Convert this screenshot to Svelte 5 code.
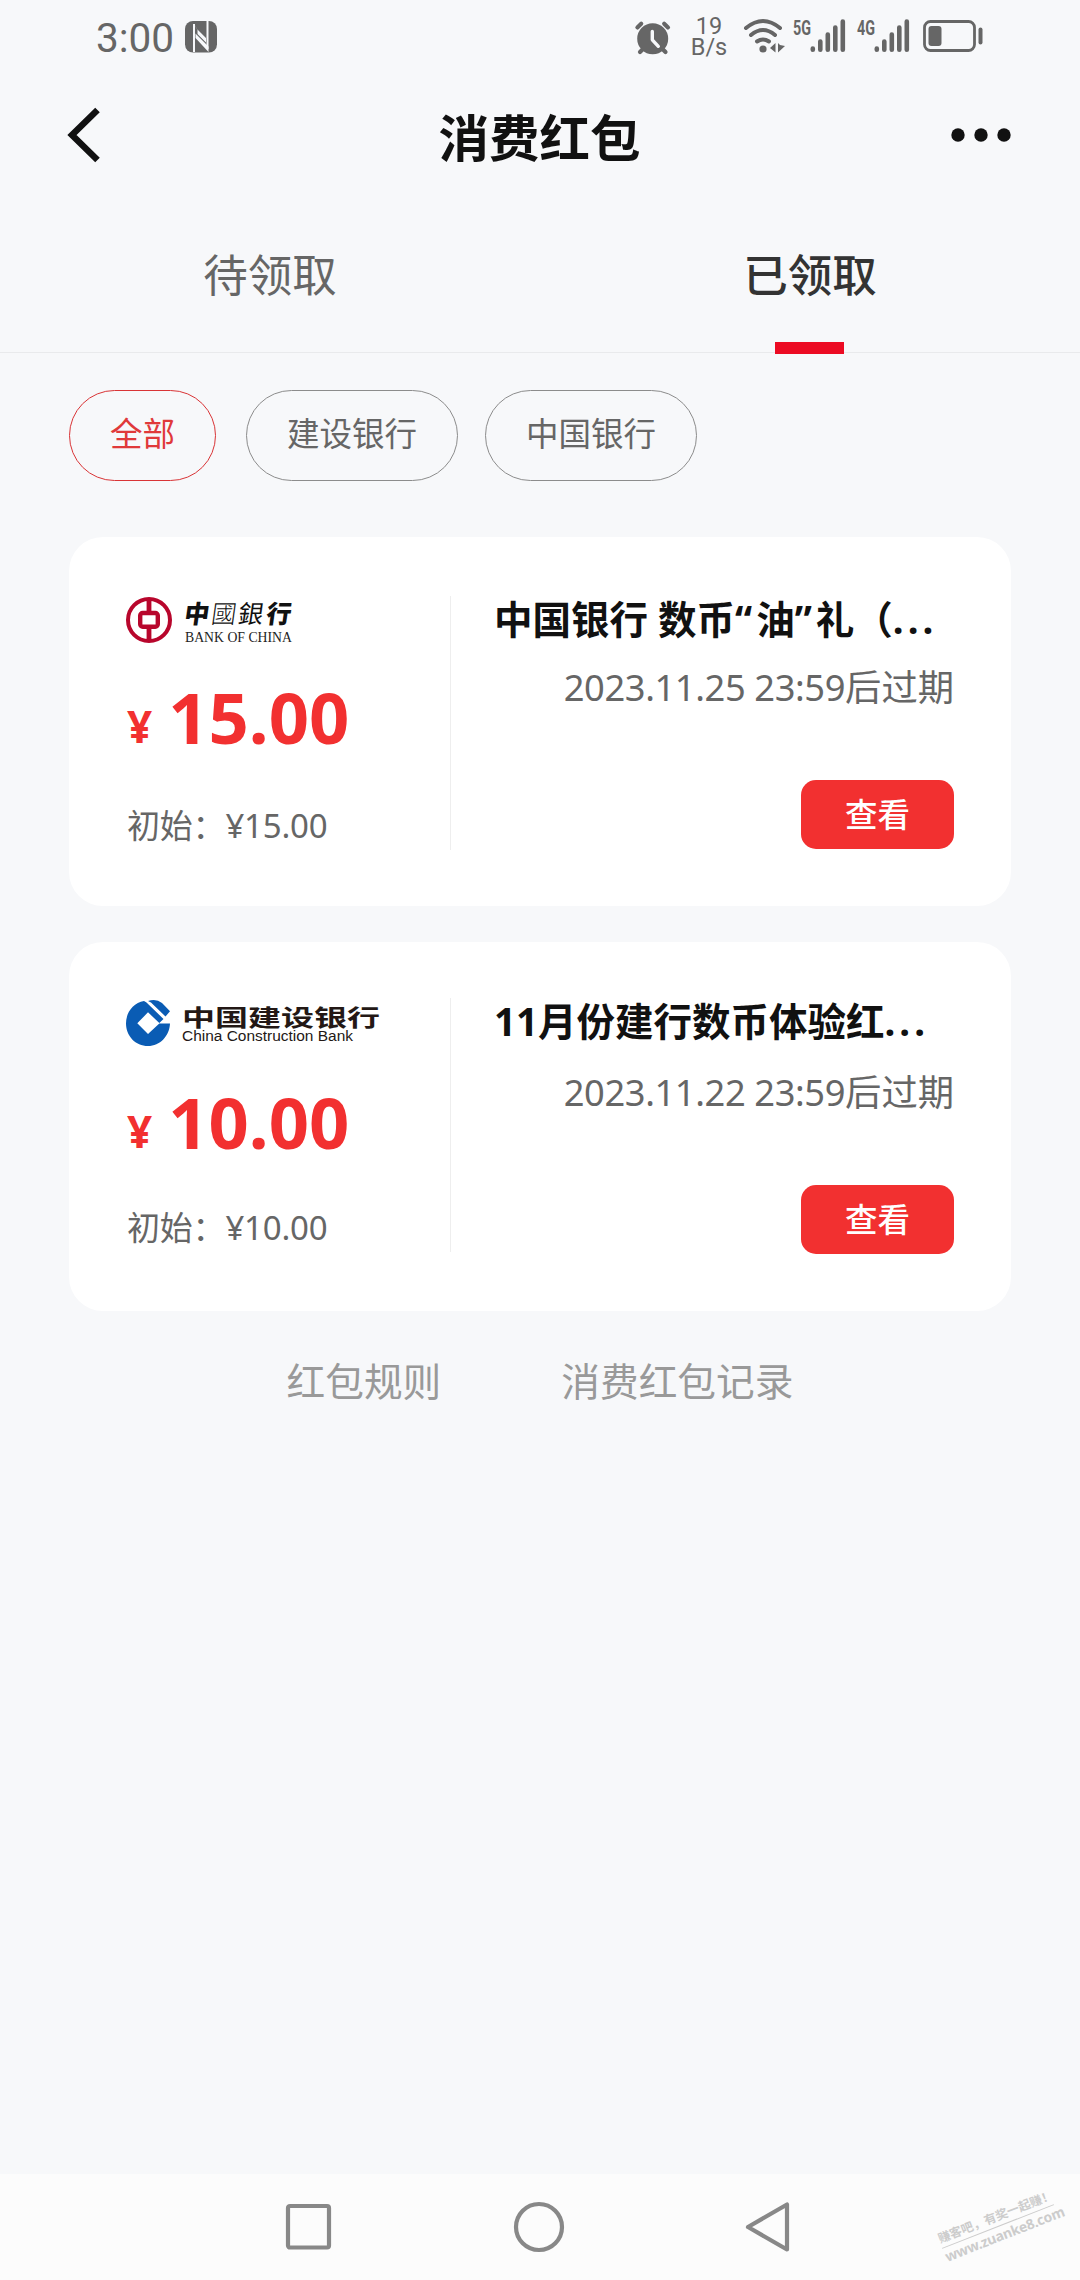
<script lang="ts">
	interface Packet {
		bank: 'boc' | 'ccb';
		title: string;
		amount: string;
		expires: string;
	}

	const tabs = ['待领取', '已领取'];
	const filters = ['全部', '建设银行', '中国银行'];
	const packets: Packet[] = [
		{ bank: 'boc', title: '中国银行 数币“油”礼（...', amount: '15.00', expires: '2023.11.25 23:59' },
		{ bank: 'ccb', title: '11月份建行数币体验红...', amount: '10.00', expires: '2023.11.22 23:59' }
	];

	let activeTab = $state('已领取');
	let activeFilter = $state('全部');

	// quotes and dots get their own tracking
	const splitTitle = (title: string) => title.split(/([“”]|\.\.\.)/);
</script>

{#snippet signal(label: string)}
	<svg class="signal" width="54" height="36" viewBox="0 0 54 36">
		<text x="0" y="15.5" font-size="20" font-weight="700" textLength="18" lengthAdjust="spacingAndGlyphs">{label}</text>
		<g stroke="#666" stroke-width="4.6" stroke-linecap="round">
			<path d="M19.8 29.5v1.2M27.3 22.5v8.2M34.8 15.5v15.2M42.3 8.5v22.2M49.8 2.5v28.2" />
		</g>
	</svg>
{/snippet}

<div class="screen">
	<div class="status">
		<span class="time">3:00</span>
		<svg width="32" height="32" viewBox="0 0 32 32">
			<rect width="32" height="31.5" rx="8" fill="#666" />
			<path d="M9 3V31M22.5 0V28" fill="none" stroke="#f7f8fa" stroke-width="2" />
			<path d="M8 1L12.5 9V13L21 21.500V17L11.500 7.500ZM10.500 12.500L23.500 25.500V31L10.500 17Z" fill="#f7f8fa" />
		</svg>
		<svg class="alarm" width="36" height="36" viewBox="0 0 36 36">
			<g stroke="#666" stroke-width="4.2" stroke-linecap="round">
				<path d="M2.4 8.4L6.2 4.8M33 8.4L29.200 4.8M5 33L9 29M30.500 33L26.500 29" />
			</g>
			<circle cx="17.700" cy="19.8" r="15.5" fill="#666" />
			<path d="M17.300 12.500v8.300l6 6.500" fill="none" stroke="#f7f8fa" stroke-width="3.4" stroke-linecap="round" stroke-linejoin="round" />
		</svg>
		<div class="speed"><span>19</span><span>B/s</span></div>
		<svg class="wifi" width="42" height="36" viewBox="0 0 42 36">
			<g fill="none" stroke="#666" stroke-width="4" stroke-linecap="round">
				<path d="M3 9Q20 -5 37 9M8 16Q20 6 32 16M14 22.500Q20 18.500 26 22.500" />
			</g>
			<circle cx="20" cy="30" r="3.600" fill="#666" />
			<path d="M32.500 24v9.500l-5.500-4.500zM35 24l2 2 5 1-7 6.500z" fill="#666" />
		</svg>
		{@render signal('5G')}
		{@render signal('4G')}
		<svg class="battery" width="61" height="34" viewBox="0 0 61 34">
			<rect x="1.500" y="1.500" width="50" height="29" rx="6" fill="none" stroke="#666" stroke-width="2.800" />
			<rect x="5.500" y="6" width="13" height="20" rx="3" fill="#666" />
			<rect x="55.500" y="7.500" width="4" height="17" rx="2" fill="#666" />
		</svg>
	</div>

	<header>
		<svg width="60" height="56" viewBox="0 0 60 56">
			<path d="M29.500 3L4 28L29.500 53" fill="none" stroke="#111" stroke-width="6.500" />
		</svg>
		<h1>消费红包</h1>
		<svg width="60" height="14" viewBox="0 0 60 14" fill="#111">
			<circle cx="7" cy="7" r="6.700" />
			<circle cx="30" cy="7" r="6.700" />
			<circle cx="53" cy="7" r="6.700" />
		</svg>
	</header>

	<nav class="tabs">
		{#each tabs as tab (tab)}
			<button class:active={tab === activeTab} onclick={() => (activeTab = tab)}>{tab}</button>
		{/each}
	</nav>

	<div class="filters">
		{#each filters as filter (filter)}
			<button class:active={filter === activeFilter} onclick={() => (activeFilter = filter)}>{filter}</button>
		{/each}
	</div>

	<main>
		{#each packets as p (p.bank)}
			<article class={p.bank}>
				<div class="value">
					{#if p.bank === 'boc'}
						<svg class="logo" width="260" height="50" viewBox="0 0 260 50">
							<g fill="none" stroke="#b8062c">
								<circle cx="23" cy="24" r="21" stroke-width="4" />
								<rect x="14.200" y="17" width="17.600" height="13.800" rx="2.500" stroke-width="4.400" />
								<path d="M23 3v12M23 32v12" stroke-width="4.800" />
							</g>
							<g class="brush" transform="skewX(-8)">
								<text class="heavy" x="61" y="27">中</text>
								<text class="light" x="88" y="27">國</text>
								<text x="115" y="27">銀</text>
								<text class="heavy" x="143" y="27">行</text>
							</g>
							<text class="serif" x="59" y="45.500" font-size="14.500" textLength="107" lengthAdjust="spacingAndGlyphs">BANK OF CHINA</text>
						</svg>
					{:else}
						<svg class="logo" width="260" height="50" viewBox="0 0 260 50">
							<g fill="#0a5cb4">
								<path d="M18 3C7.500 5 0 14 0 25.500C0 38 9.500 48 22 48C34 48 43.500 38 44 25.500H33.300L22 36L11.300 25.300L22 14.300L33.300 25L37.500 21L20.500 4.500Z" />
								<path d="M22 3Q30 0 36 5L44 13.300L39.500 18.500L25 4.500Z" />
							</g>
							<text class="wide" x="56" y="27.500" font-size="23" textLength="198" lengthAdjust="spacingAndGlyphs">中国建设银行</text>
							<text class="latin" x="56" y="43" font-size="15.500" textLength="171" lengthAdjust="spacingAndGlyphs">China Construction Bank</text>
						</svg>
					{/if}
					<p class="amount"><small>¥</small><strong>{p.amount}</strong></p>
					<p class="initial">初始：¥{p.amount}</p>
				</div>
				<div class="detail">
					<h2>
						{#each splitTitle(p.title) as part}<span class:quote={/[“”]/.test(part)} class:dots={part === '...'}>{part}</span>{/each}
					</h2>
					<p class="expires"><span>{p.expires}</span>后过期</p>
					<button>查看</button>
				</div>
			</article>
		{/each}
	</main>

	<div class="links">
		<span>红包规则</span>
		<span>消费红包记录</span>
	</div>

	<footer>
		<svg width="50" height="54" viewBox="0 0 50 54">
			<rect x="5" y="6" width="41" height="41.500" rx="2" />
		</svg>
		<svg width="54" height="54" viewBox="0 0 54 54">
			<circle cx="27" cy="27" r="23" />
		</svg>
		<svg width="50" height="54" viewBox="0 0 50 54">
			<path d="M43 4.500V49.500L4 27Z" stroke-linejoin="round" />
		</svg>
		<div class="watermark"><span>赚客吧，有奖一起赚！</span><span>www.zuanke8.com</span></div>
	</footer>
</div>

<style>
	:global(body) {
		margin: 0;
		background: #f7f8fa;
	}

	.screen {
		position: relative;
		display: flex;
		flex-direction: column;
		width: 1080px;
		height: 2280px;
		overflow: hidden;
		background: #f7f8fa;
		font-family: 'Noto Sans', 'Noto Sans CJK SC', sans-serif;
		color: #666;
	}

	button {
		padding: 0;
		border: 0;
		background: none;
		font: inherit;
		color: inherit;
	}

	h1,
	h2,
	p {
		margin: 0;
	}

	svg {
		flex: none;
		overflow: visible;
	}

	.status {
		display: flex;
		align-items: center;
		height: 74px;
		padding-left: 96px;
		font-family: Roboto, sans-serif;
	}

	.status svg {
		fill: #666;
	}

	.time {
		width: 89px;
		padding-top: 2px;
		font-size: 40.5px;
	}

	.alarm {
		margin-left: 418px;
	}

	.speed {
		display: flex;
		flex-direction: column;
		width: 50px;
		margin-left: 13px;
		align-items: center;
		font-size: 23.5px;
		line-height: 21px;
	}

	.wifi {
		margin-left: 9px;
	}

	.signal {
		margin-left: 8px;
	}

	.signal + .signal {
		margin-left: 10px;
	}

	.battery {
		margin-left: 12px;
	}

	header {
		display: flex;
		align-items: center;
		justify-content: space-between;
		height: 122px;
		padding: 0 69px 0 68px;
	}

	h1 {
		padding-top: 6px;
		font-size: 50.5px;
		font-weight: 700;
		line-height: 60px;
		color: #111;
	}

	.tabs {
		display: flex;
		height: 156px;
		border-bottom: 1px solid #e9eaec;
	}

	.tabs button {
		position: relative;
		flex: 1;
		padding-bottom: 3px;
		font-size: 44.5px;
	}

	.tabs .active {
		font-weight: 500;
		color: #333;
	}

	.tabs .active::after {
		content: '';
		position: absolute;
		bottom: -2px;
		left: calc(50% - 35px);
		width: 69px;
		height: 12px;
		background: #ec0b23;
	}

	.filters {
		display: flex;
		gap: 27px;
		padding: 37px 69px 0;
	}

	.filters button {
		height: 91px;
		padding: 0 40px 8px;
		border: 1px solid #8c8c8c;
		border-radius: 46px;
		font-size: 32.5px;
	}

	.filters button:first-child {
		margin-right: 3px;
	}

	.filters .active {
		border-color: #d93436;
		color: #e0393a;
	}

	main {
		display: flex;
		flex-direction: column;
		gap: 36px;
		padding: 56px 69px 0;
	}

	article {
		display: flex;
		box-sizing: border-box;
		height: 369px;
		padding: 59px 57px 0;
		border-radius: 34px;
		background: #fff;
	}

	.ccb {
		padding-top: 56px;
	}

	.value {
		display: flex;
		flex-direction: column;
		width: 324px;
		height: 254px;
		border-right: 1px solid #eee;
	}

	.brush {
		font-family: 'Noto Sans CJK TC', serif;
		font-size: 25px;
		fill: #111;
	}

	.brush .heavy {
		font-weight: 900;
	}

	.brush .light {
		font-weight: 300;
	}

	.serif {
		font-family: 'Liberation Serif', serif;
		fill: #222;
	}

	.wide {
		font-weight: 700;
		fill: #231815;
	}

	.latin {
		font-family: 'Liberation Sans', sans-serif;
		fill: #231815;
	}

	.amount {
		display: flex;
		align-items: baseline;
		gap: 16px;
		height: 96px;
		margin-top: 23px;
		padding-left: 1px;
		line-height: 96px;
		color: #f23030;
	}

	.ccb .amount {
		margin-top: 26px;
	}

	.amount small {
		position: relative;
		top: -1px;
		font-size: 44px;
		font-weight: 700;
	}

	.amount strong {
		font-size: 70.5px;
	}

	.initial {
		margin-top: 37px;
		padding-left: 1px;
		font-size: 33px;
		line-height: 48px;
		letter-spacing: -0.2px;
	}

	.ccb .initial {
		margin-top: 34px;
	}

	.detail {
		display: flex;
		flex: 1;
		flex-direction: column;
		align-items: flex-end;
	}

	h2 {
		align-self: stretch;
		height: 48px;
		padding-left: 43px;
		font-size: 38.5px;
		font-weight: 700;
		line-height: 47px;
		white-space: nowrap;
		color: #111;
	}

	.quote {
		letter-spacing: 4px;
	}

	.dots {
		letter-spacing: 4px;
	}

	.expires {
		margin-top: 19px;
		font-size: 36.3px;
		line-height: 48px;
	}

	.expires span {
		letter-spacing: -0.4px;
	}

	.ccb .expires {
		margin-top: 22px;
	}

	.detail button {
		width: 153px;
		height: 69px;
		margin-top: 69px;
		padding-bottom: 4px;
		border-radius: 15px;
		background: #f23030;
		font-size: 32.5px;
		font-weight: 500;
		color: #fff;
	}

	.links {
		display: flex;
		justify-content: center;
		gap: 120px;
		padding-top: 42px;
		font-size: 38.7px;
		line-height: 56px;
		color: #999;
	}

	footer {
		display: flex;
		align-items: center;
		justify-content: space-between;
		box-sizing: border-box;
		height: 106px;
		margin-top: auto;
		padding: 0 286px 0 283px;
		background: #fcfcfc;
	}

	footer svg {
		fill: none;
		stroke: #888;
		stroke-width: 4.2;
	}

	.watermark {
		position: absolute;
		right: 22px;
		bottom: 35px;
		display: flex;
		flex-direction: column;
		width: 120px;
		transform: rotate(-21.4deg);
		font-size: 12.3px;
		font-weight: 700;
		line-height: 18px;
		white-space: nowrap;
		color: #ccc;
	}

	.watermark span + span {
		border-top: 1px solid #ccc;
		font-size: 14px;
		letter-spacing: -0.3px;
	}
</style>
